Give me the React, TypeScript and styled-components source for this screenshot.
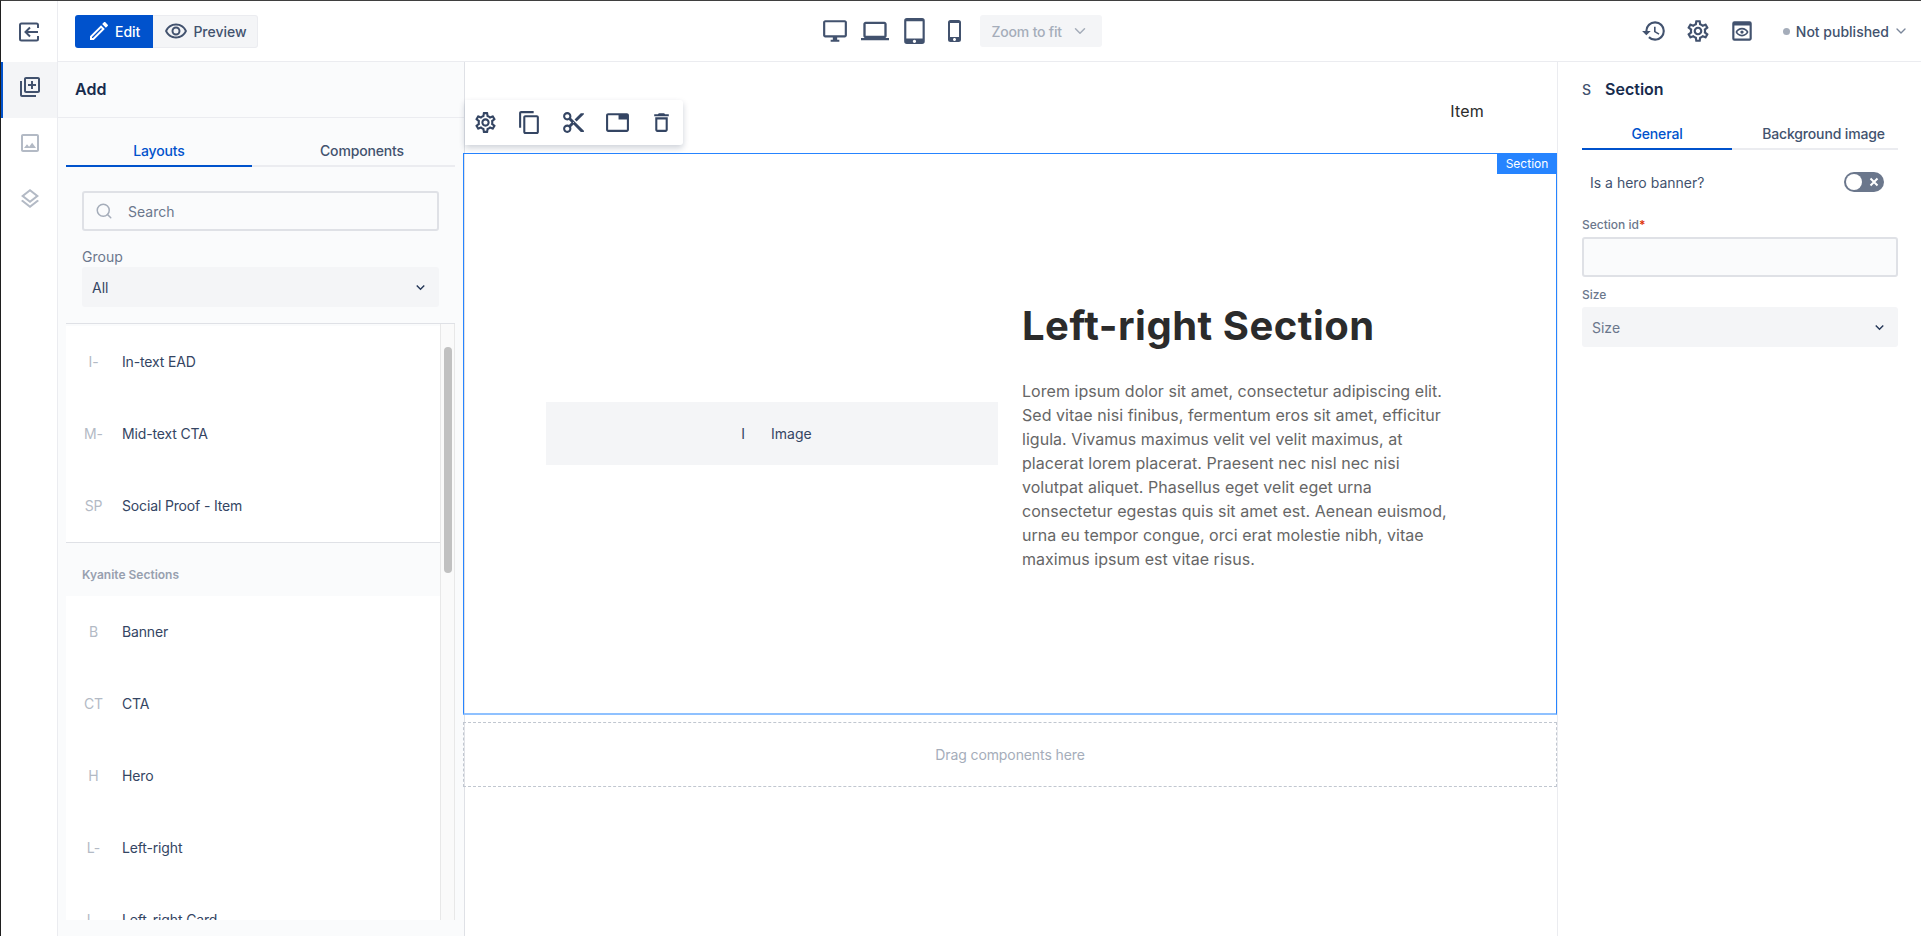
import { ReactNode } from "react";
import styled, { createGlobalStyle } from "styled-components";
import {
  MdContentCopy,
  MdHistory,
  MdKeyboardArrowDown,
  MdLaptop,
  MdOutlineContentCut,
  MdOutlineDelete,
  MdOutlineDesktopWindows,
  MdOutlineEdit,
  MdOutlineImage,
  MdOutlineLayers,
  MdOutlineLibraryAdd,
  MdOutlinePreview,
  MdOutlineRemoveRedEye,
  MdOutlineSettings,
  MdOutlineTab,
  MdPhoneIphone,
  MdTabletMac,
} from "react-icons/md";
import { FiChevronDown, FiSearch } from "react-icons/fi";

const GlobalStyle = createGlobalStyle`
  html, body {
    margin: 0;
    padding: 0;
    background: #fff;
    overflow: hidden;
  }
  * { box-sizing: border-box; }
`;

const Frame = styled.div`
  width: 1921px;
  height: 936px;
  display: grid;
  grid-template-columns: 57px 1fr;
  grid-template-rows: minmax(0, 1fr);
  border-top: 1px solid #3f3f3f;
  border-left: 1px solid #1f1f1f;
  font-family: Inter, "Liberation Sans", sans-serif;
  color: #172b4d;
  overflow: hidden;
`;

const Rail = styled.nav`
  display: flex;
  flex-direction: column;
  border-right: 1px solid #ebecf0;
`;

const RailCell = styled.div<{ $active?: boolean; $muted?: boolean }>`
  height: 56px;
  padding-bottom: 7px;
  display: flex;
  align-items: center;
  justify-content: center;
  background: ${(p) => (p.$active ? "#f4f5f7" : "transparent")};
  border-left: 2px solid ${(p) => (p.$active ? "#0052cc" : "transparent")};
  color: ${(p) => (p.$muted ? "#b3bac5" : "#42526e")};
  font-size: 24px;
`;

const RailTop = styled(RailCell)`
  height: 61px;
  padding-bottom: 0;
  border-left: 0;
`;

const Workspace = styled.div`
  display: grid;
  grid-template-rows: 61px minmax(0, 1fr);
  min-width: 0;
`;

const Header = styled.header`
  display: flex;
  align-items: center;
  justify-content: space-between;
  padding: 0 12px 0 17px;
  border-bottom: 1px solid #ebecf0;
`;

const ModeGroup = styled.div`
  display: flex;
  height: 33px;
`;

const ModeButton = styled.button<{ $on?: boolean }>`
  display: flex;
  align-items: center;
  gap: ${(p) => (p.$on ? 4 : 5)}px;
  height: 33px;
  padding: ${(p) => (p.$on ? "0 13px 0 12px" : "0 10px 0 11px")};
  border: ${(p) => (p.$on ? "0" : "1px solid #ebecf0")};
  border-left: 0;
  border-radius: ${(p) => (p.$on ? "3px 0 0 3px" : "0 3px 3px 0")};
  background: ${(p) => (p.$on ? "#0052cc" : "#f4f5f7")};
  color: ${(p) => (p.$on ? "#fff" : "#42526e")};
  font: 500 14px Inter, "Liberation Sans", sans-serif;
  svg { font-size: 24px; }
`;

const Devices = styled.div`
  display: flex;
  align-items: center;
  margin-left: 18px;
  color: #42526e;
`;

const DeviceIcon = styled.span<{ $size: number }>`
  width: 40px;
  display: flex;
  justify-content: center;
  font-size: ${(p) => p.$size}px;
`;

const ZoomButton = styled.button`
  display: flex;
  align-items: center;
  gap: 9px;
  height: 32px;
  margin-left: 5px;
  padding: 0 13px 0 12px;
  border: 0;
  border-radius: 3px;
  background: #f4f5f7;
  color: #a5adba;
  font: 500 14px Inter, "Liberation Sans", sans-serif;
  letter-spacing: -0.2px;
`;

const HeaderRight = styled.div`
  display: flex;
  align-items: center;
  color: #42526e;
`;

const HeaderIcon = styled.span`
  display: flex;
  font-size: 26px;
  margin-right: 18px;
`;

const Status = styled.div`
  display: flex;
  align-items: center;
  margin-left: 10px;
  font-size: 14px;
  font-weight: 500;
  color: #42526e;
  svg { margin-left: 4px; color: #7a869a; }
`;

const StatusDot = styled.i`
  width: 7px;
  height: 7px;
  margin-right: 6px;
  border-radius: 50%;
  background: #a5adba;
`;

const Body = styled.div`
  display: grid;
  grid-template-columns: 407px 1fr 364px;
  min-height: 0;
`;

const AddPanel = styled.aside`
  display: flex;
  flex-direction: column;
  min-height: 0;
  background: #fafbfc;
  border-right: 1px solid #dfe1e6;
  overflow: hidden;
`;

const PanelTitle = styled.h2`
  height: 56px;
  flex: none;
  margin: 0;
  padding: 0 17px 2px;
  display: flex;
  align-items: center;
  border-bottom: 1px solid #ebecf0;
  font-size: 16px;
  font-weight: 600;
  color: #172b4d;
`;

const Tabs = styled.div<{ $wide?: boolean }>`
  display: grid;
  grid-template-columns: ${(p) => (p.$wide ? "186px 203px" : "150px 166px")};
  flex: none;
`;

const LeftTabs = styled(Tabs)`
  margin: 18px 0 0 8px;
`;

const RightTabs = styled(Tabs)`
  margin-top: 1px;
`;

const Tab = styled.div<{ $on?: boolean }>`
  height: 31px;
  display: flex;
  align-items: center;
  justify-content: center;
  padding-left: ${(p) => (p.$on ? 0 : 17)}px;
  border-bottom: 2px solid ${(p) => (p.$on ? "#0052cc" : "#ebecf0")};
  color: ${(p) => (p.$on ? "#0052cc" : "#42526e")};
  font-size: 14px;
  font-weight: 500;
  letter-spacing: -0.15px;
`;

const Search = styled.label`
  display: flex;
  align-items: center;
  gap: 15px;
  flex: none;
  width: 357px;
  height: 40px;
  margin: 24px 0 0 24px;
  padding-left: 11px;
  border: 2px solid #dfe1e6;
  border-radius: 3px;
  color: #6b778c;
  font-size: 14px;
  svg { color: #a5adba; font-size: 18px; }
`;

const FieldLabel = styled.div`
  margin: 17px 0 0 24px;
  height: 18px;
  flex: none;
  line-height: 18px;
  font-size: 14px;
  color: #6b778c;
`;

const Select = styled.div<{ $muted?: boolean }>`
  display: flex;
  align-items: center;
  justify-content: space-between;
  flex: none;
  height: 40px;
  padding: 0 10px;
  border-radius: 3px;
  background: #f4f5f7;
  color: ${(p) => (p.$muted ? "#6b778c" : "#344563")};
  font-size: 14px;
  svg { color: #253858; font-size: 17px; }
`;

const GroupSelect = styled(Select)`
  width: 357px;
  margin: 1px 0 0 24px;
`;

const ListFrame = styled.div`
  position: relative;
  flex: 1;
  min-height: 0;
  margin: 16px 9px 16px 8px;
  padding: 2px 15px 0 0;
  border-top: 1px solid #dfe1e6;
  overflow: hidden;
`;

const ScrollTrack = styled.div`
  position: absolute;
  top: 0;
  right: 0;
  bottom: 0;
  width: 15px;
  background: #fafafa;
  border-left: 1px solid #e8e8e8;
  border-right: 1px solid #e8e8e8;
`;

const ScrollThumb = styled.div`
  position: absolute;
  top: 23px;
  left: 3px;
  width: 8px;
  height: 226px;
  border-radius: 4px;
  background: #c1c1c1;
`;

const ListRows = styled.div`
  background: #fff;
`;

const Row = styled.div`
  height: 72px;
  padding-bottom: 1px;
  display: flex;
  align-items: center;
  font-size: 14px;
  letter-spacing: -0.15px;
  color: #344563;
`;

const RowMark = styled.span`
  width: 56px;
  padding-right: 1px;
  text-align: center;
  color: #b3bac5;
  font-size: 14px;
`;

const GroupBand = styled.div`
  height: 54px;
  padding: 22px 0 0 16px;
  line-height: 20px;
  background: #fafbfc;
  border-top: 1px solid #dfe1e6;
  color: #97a0af;
  font-size: 12px;
  font-weight: 600;
`;

const Canvas = styled.main`
  position: relative;
  min-width: 0;
  display: flex;
  flex-direction: column;
  margin-left: -2px;
`;

const SiteNav = styled.div`
  height: 91px;
  padding: 33px 73px 0 0;
  text-align: right;
  line-height: 32px;
  font-size: 16px;
  font-weight: 400;
  letter-spacing: 0.2px;
  color: #2b2b2b;
`;

const FloatBar = styled.div`
  position: absolute;
  top: 38px;
  left: 2px;
  display: flex;
  align-items: center;
  gap: 19px;
  height: 45px;
  padding: 0 8px;
  width: 218px;
  background: #fff;
  border-radius: 0 3px 3px 0;
  box-shadow: 0 3px 6px rgba(9, 30, 66, 0.2);
  color: #344563;
  z-index: 2;
  svg { display: block; width: 25px; height: 25px; flex: none; }
`;

const SectionBox = styled.section`
  position: relative;
  height: 562px;
  flex: none;
  display: flex;
  align-items: center;
  gap: 24px;
  padding-left: 82px;
  border: 1px solid #2684ff;
  border-bottom: 2px solid #8fc1ff;
`;

const SectionTag = styled.span`
  position: absolute;
  top: -1px;
  right: -1px;
  width: 60px;
  height: 21px;
  line-height: 21px;
  text-align: center;
  background: #2684ff;
  color: #fff;
  font-size: 12px;
`;

const ImageSlot = styled.div`
  width: 452px;
  height: 63px;
  display: flex;
  align-items: center;
  justify-content: center;
  gap: 26px;
  padding-left: 9px;
  background: #f4f5f7;
  color: #344563;
  font-size: 14px;
`;

const Copy = styled.div`
  width: 436px;
  padding-top: 6px;
`;

const Heading = styled.h1`
  margin: 0 0 29px;
  font-size: 40px;
  line-height: 48px;
  font-weight: 700;
  letter-spacing: 0.5px;
  color: #2b2b2b;
  white-space: nowrap;
`;

const Lede = styled.p`
  margin: 0;
  font-size: 16px;
  line-height: 24px;
  letter-spacing: 0.04px;
  color: #666;
`;

const DropZone = styled.div`
  height: 65px;
  flex: none;
  margin-top: 7px;
  display: flex;
  align-items: center;
  justify-content: center;
  border: 1px dashed #c1c7d0;
  color: #a5adba;
  font-size: 14px;
  letter-spacing: -0.1px;
`;

const PropsPanel = styled.aside`
  padding: 0 23px 0 24px;
  border-left: 1px solid #ebecf0;
`;

const PropsTitle = styled.h2`
  height: 56px;
  margin: 0;
  padding-bottom: 2px;
  display: flex;
  align-items: center;
  gap: 14px;
  font-size: 16px;
  font-weight: 600;
`;

const PropsMark = styled.span`
  color: #42526e;
  font-size: 14px;
  font-weight: 500;
`;

const ToggleRow = styled.div`
  display: flex;
  align-items: center;
  justify-content: space-between;
  height: 22px;
  margin-top: 21px;
  padding: 0 14px 0 8px;
  font-size: 14px;
  color: #42526e;
`;

const Toggle = styled.span`
  position: relative;
  width: 40px;
  height: 20px;
  border-radius: 10px;
  background: #6b778c;
`;

const Knob = styled.i`
  position: absolute;
  top: 2px;
  left: 2px;
  width: 16px;
  height: 16px;
  border-radius: 50%;
  background: #fff;
`;

const ToggleCross = styled.svg`
  position: absolute;
  top: 5px;
  right: 5px;
`;

const PropLabel = styled.div<{ $gap?: number }>`
  height: 16px;
  line-height: 16px;
  margin-top: ${(p) => p.$gap ?? 0}px;
  margin-bottom: 4px;
  font-size: 12px;
  font-weight: 500;
  color: #6b778c;
  b { color: #de350b; font-weight: 600; }
`;

const IdField = styled.div`
  height: 40px;
  margin-bottom: 10px;
  background: #fafbfc;
  border: 2px solid #dfe1e6;
  border-radius: 3px;
`;

const ExitIcon = () => (
  <svg width="24" height="24" viewBox="0 0 24 24" fill="none" stroke="currentColor" strokeWidth="2">
    <path d="M21 8V5a1.5 1.5 0 0 0-1.5-1.5h-15A1.5 1.5 0 0 0 3 5v14a1.5 1.5 0 0 0 1.5 1.5h15A1.5 1.500 0 0 0 21 19v-3" />
    <path d="M21 12H9M13 7.500 8.500 12l4.500 4.500" />
  </svg>
);

const rowsTop = [
  ["I-", "In-text EAD"],
  ["M-", "Mid-text CTA"],
  ["SP", "Social Proof - Item"],
];

const rowsBottom = [
  ["B", "Banner"],
  ["CT", "CTA"],
  ["H", "Hero"],
  ["L-", "Left-right"],
  ["L-", "Left-right Card"],
];

const ItemRow = ({ mark, children }: { mark: string; children: ReactNode }) => (
  <Row>
    <RowMark>{mark}</RowMark>
    {children}
  </Row>
);

export default function App() {
  return (
    <>
      <GlobalStyle />
      <Frame>
        <Rail>
          <RailTop>
            <ExitIcon />
          </RailTop>
          <RailCell $active>
            <MdOutlineLibraryAdd />
          </RailCell>
          <RailCell $muted>
            <MdOutlineImage />
          </RailCell>
          <RailCell $muted>
            <MdOutlineLayers />
          </RailCell>
        </Rail>
        <Workspace>
          <Header>
            <ModeGroup>
              <ModeButton $on>
                <MdOutlineEdit />
                Edit
              </ModeButton>
              <ModeButton>
                <MdOutlineRemoveRedEye />
                Preview
              </ModeButton>
            </ModeGroup>
            <Devices>
              <DeviceIcon $size={26}>
                <MdOutlineDesktopWindows />
              </DeviceIcon>
              <DeviceIcon $size={28}>
                <MdLaptop />
              </DeviceIcon>
              <DeviceIcon $size={26}>
                <MdTabletMac />
              </DeviceIcon>
              <DeviceIcon $size={24}>
                <MdPhoneIphone />
              </DeviceIcon>
              <ZoomButton>
                Zoom to fit
                <FiChevronDown size={18} />
              </ZoomButton>
            </Devices>
            <HeaderRight>
              <HeaderIcon>
                <MdHistory />
              </HeaderIcon>
              <HeaderIcon>
                <MdOutlineSettings />
              </HeaderIcon>
              <HeaderIcon>
                <MdOutlinePreview />
              </HeaderIcon>
              <Status>
                <StatusDot />
                Not published
                <FiChevronDown size={16} />
              </Status>
            </HeaderRight>
          </Header>
          <Body>
            <AddPanel>
              <PanelTitle>Add</PanelTitle>
              <LeftTabs $wide>
                <Tab $on>Layouts</Tab>
                <Tab>Components</Tab>
              </LeftTabs>
              <Search>
                <FiSearch />
                Search
              </Search>
              <FieldLabel>Group</FieldLabel>
              <GroupSelect>
                All
                <MdKeyboardArrowDown />
              </GroupSelect>
              <ListFrame>
                <ListRows>
                  {rowsTop.map(([mark, name]) => (
                    <ItemRow key={name} mark={mark}>
                      {name}
                    </ItemRow>
                  ))}
                  <GroupBand>Kyanite Sections</GroupBand>
                  {rowsBottom.map(([mark, name]) => (
                    <ItemRow key={name} mark={mark}>
                      {name}
                    </ItemRow>
                  ))}
                </ListRows>
                <ScrollTrack>
                  <ScrollThumb />
                </ScrollTrack>
              </ListFrame>
            </AddPanel>
            <Canvas>
              <SiteNav>Item</SiteNav>
              <FloatBar>
                <MdOutlineSettings />
                <MdContentCopy />
                <MdOutlineContentCut />
                <MdOutlineTab />
                <MdOutlineDelete />
              </FloatBar>
              <SectionBox>
                <SectionTag>Section</SectionTag>
                <ImageSlot>
                  <span>I</span>
                  <span>Image</span>
                </ImageSlot>
                <Copy>
                  <Heading>Left-right Section</Heading>
                  <Lede>
                    Lorem ipsum dolor sit amet, consectetur adipiscing elit. Sed vitae nisi finibus, fermentum eros sit
                    amet, efficitur ligula. Vivamus maximus velit vel velit maximus, at placerat lorem placerat. Praesent
                    nec nisl nec nisi volutpat aliquet. Phasellus eget velit eget urna consectetur egestas quis sit amet
                    est. Aenean euismod, urna eu tempor congue, orci erat molestie nibh, vitae maximus ipsum est vitae
                    risus.
                  </Lede>
                </Copy>
              </SectionBox>
              <DropZone>Drag components here</DropZone>
            </Canvas>
            <PropsPanel>
              <PropsTitle>
                <PropsMark>S</PropsMark>
                Section
              </PropsTitle>
              <RightTabs>
                <Tab $on>General</Tab>
                <Tab>Background image</Tab>
              </RightTabs>
              <ToggleRow>
                Is a hero banner?
                <Toggle>
                  <Knob />
                  <ToggleCross width="10" height="10" viewBox="0 0 10 10" stroke="#fff" strokeWidth="2">
                    <path d="M1.500 1.500l7 7M8.500 1.500l-7 7" />
                  </ToggleCross>
                </Toggle>
              </ToggleRow>
              <PropLabel $gap={24}>
                Section id<b>*</b>
              </PropLabel>
              <IdField />
              <PropLabel>Size</PropLabel>
              <Select $muted>
                Size
                <MdKeyboardArrowDown />
              </Select>
            </PropsPanel>
          </Body>
        </Workspace>
      </Frame>
    </>
  );
}
